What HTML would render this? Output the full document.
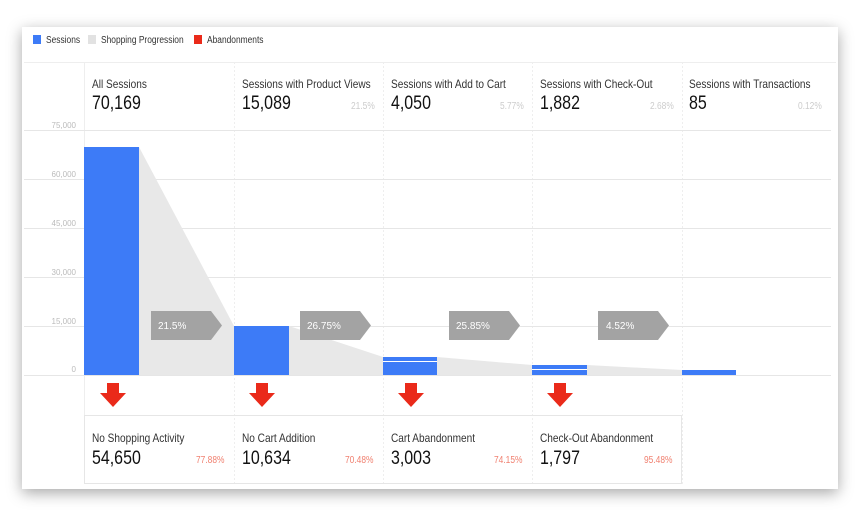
<!DOCTYPE html>
<html><head><meta charset="utf-8"><style>
body{margin:0;width:859px;height:516px;background:#fff;position:relative;overflow:hidden;font-family:"Liberation Sans",sans-serif}
.card{position:absolute;left:22px;top:27px;width:816px;height:462px;background:#fff;box-shadow:0 4px 14px rgba(0,0,0,.35)}
.t{position:absolute;white-space:nowrap;transform-origin:0 0;transform:scaleX(.84)}
.lab{font-size:12px;color:#333}
.num{font-size:19px;color:#111}
.pct{font-size:10px;color:#ccc}
.rp{font-size:10px;color:#f08070}
.ax{font-size:8px;color:#bbb;position:absolute;text-align:right;width:50px;transform:none}
</style></head><body>
<div class="card"></div>
<svg style="position:absolute;left:0;top:0" width="859" height="516">
<!-- legend -->
<rect x="33" y="35" width="8" height="9" fill="#3d7bf7"/>
<rect x="88" y="35" width="8" height="9" fill="#e2e2e2"/>
<rect x="194" y="35" width="8" height="9" fill="#ea2a1a"/>
<!-- header grid -->
<line x1="24" y1="62.5" x2="836" y2="62.5" stroke="#eee"/>
<g stroke="#eee">
<line x1="84.5" y1="62" x2="84.5" y2="484"/>
<line x1="234.5" y1="62" x2="234.5" y2="484" stroke-dasharray="2,2"/>
<line x1="383.5" y1="62" x2="383.5" y2="484" stroke-dasharray="2,2"/>
<line x1="532.5" y1="62" x2="532.5" y2="484" stroke-dasharray="2,2"/>
<line x1="682.5" y1="62" x2="682.5" y2="484" stroke-dasharray="2,2"/>
</g>
<g stroke="#e6e6e6">
<line x1="24" y1="130.5" x2="831" y2="130.5"/>
<line x1="24" y1="179.5" x2="831" y2="179.5"/>
<line x1="24" y1="228.5" x2="831" y2="228.5"/>
<line x1="24" y1="277.5" x2="831" y2="277.5"/>
<line x1="24" y1="326.5" x2="831" y2="326.5"/>
<line x1="24" y1="375.5" x2="831" y2="375.5"/>
</g>
<!-- funnel -->
<g fill="#e8e8e8">
<polygon points="139,147 234,326 234,375 139,375"/>
<polygon points="289,326 383,357 383,375 289,375"/>
<polygon points="437,357 532,365 532,375 437,375"/>
<polygon points="587,365 682,370 682,375 587,375"/>
</g>
<!-- bars -->
<g fill="#3d7bf7">
<rect x="84" y="147" width="55" height="228"/>
<rect x="234" y="326" width="55" height="49"/>
<rect x="383" y="357" width="54" height="18"/>
<rect x="532" y="365" width="55" height="10"/>
<rect x="682" y="370" width="54" height="5"/>
</g>
<line x1="383" y1="361.5" x2="437" y2="361.5" stroke="#fff"/>
<line x1="532" y1="369.5" x2="587" y2="369.5" stroke="#fff"/>
<!-- chevrons -->
<g fill="#a3a3a3">
<polygon points="151,311 211,311 222,325.5 211,340 151,340"/>
<polygon points="300,311 360,311 371,325.5 360,340 300,340"/>
<polygon points="449,311 509,311 520,325.5 509,340 449,340"/>
<polygon points="598,311 658,311 669,325.5 658,340 598,340"/>
</g>
<g fill="#fff" font-size="10" font-family="Liberation Sans">
<text x="158" y="329">21.5%</text><text x="307" y="329">26.75%</text><text x="456" y="329">25.85%</text><text x="606" y="329">4.52%</text>
</g>
<!-- red arrows -->
<g fill="#ea2a1a">
<path d="M107 383h12v10h7l-13 14-13-14h7z"/>
<path d="M256 383h12v10h7l-13 14-13-14h7z"/>
<path d="M405 383h12v10h7l-13 14-13-14h7z"/>
<path d="M554 383h12v10h7l-13 14-13-14h7z"/>
</g>
<!-- bottom cards -->
<rect x="84.5" y="415.5" width="597" height="68" fill="none" stroke="#e6e6e6"/>
</svg>
<div class="t" style="left:46px;top:35px;font-size:10px;color:#333">Sessions</div>
<div class="t" style="left:101px;top:35px;font-size:10px;color:#333">Shopping Progression</div>
<div class="t" style="left:207px;top:35px;font-size:10px;color:#333">Abandonments</div>

<div class="t ax" style="left:26px;top:121px">75,000</div>
<div class="t ax" style="left:26px;top:170px">60,000</div>
<div class="t ax" style="left:26px;top:219px">45,000</div>
<div class="t ax" style="left:26px;top:268px">30,000</div>
<div class="t ax" style="left:26px;top:317px">15,000</div>
<div class="t ax" style="left:26px;top:365px">0</div>

<div class="t lab" style="left:92px;top:77px">All Sessions</div>
<div class="t num" style="left:92px;top:93px">70,169</div>
<div class="t lab" style="left:242px;top:77px">Sessions with Product Views</div>
<div class="t num" style="left:242px;top:93px">15,089</div>
<div class="t pct" style="left:351px;top:101px">21.5%</div>
<div class="t lab" style="left:391px;top:77px">Sessions with Add to Cart</div>
<div class="t num" style="left:391px;top:93px">4,050</div>
<div class="t pct" style="left:500px;top:101px">5.77%</div>
<div class="t lab" style="left:540px;top:77px">Sessions with Check-Out</div>
<div class="t num" style="left:540px;top:93px">1,882</div>
<div class="t pct" style="left:650px;top:101px">2.68%</div>
<div class="t lab" style="left:689px;top:77px">Sessions with Transactions</div>
<div class="t num" style="left:689px;top:93px">85</div>
<div class="t pct" style="left:798px;top:101px">0.12%</div>

<div class="t lab" style="left:92px;top:431px">No Shopping Activity</div>
<div class="t num" style="left:92px;top:448px">54,650</div>
<div class="t rp" style="left:196px;top:455px">77.88%</div>
<div class="t lab" style="left:242px;top:431px">No Cart Addition</div>
<div class="t num" style="left:242px;top:448px">10,634</div>
<div class="t rp" style="left:345px;top:455px">70.48%</div>
<div class="t lab" style="left:391px;top:431px">Cart Abandonment</div>
<div class="t num" style="left:391px;top:448px">3,003</div>
<div class="t rp" style="left:494px;top:455px">74.15%</div>
<div class="t lab" style="left:540px;top:431px">Check-Out Abandonment</div>
<div class="t num" style="left:540px;top:448px">1,797</div>
<div class="t rp" style="left:644px;top:455px">95.48%</div>
</body></html>
